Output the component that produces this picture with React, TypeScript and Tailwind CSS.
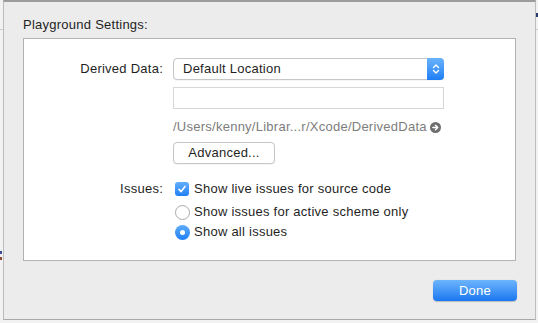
import React from "react";

function Chevrons() {
  return (
    <svg width="8" height="12" viewBox="0 0 8 12" fill="none" stroke="white" strokeWidth="1.4" strokeLinecap="round" strokeLinejoin="round">
      <path d="M1.5 4.5 L4 2 L6.5 4.5" />
      <path d="M1.5 7.5 L4 10 L6.5 7.5" />
    </svg>
  );
}

function PopUp() {
  return (
    <div className="flex h-[22px] w-[271px] rounded-[4px] border border-[#c6c6c6] bg-white shadow-[0_0.5px_0.5px_rgba(0,0,0,0.08)]">
      <span className="flex-1 pl-[9px] leading-[20px]">Default Location</span>
      <div className="-my-px -mr-px flex w-[17px] items-center justify-center rounded-r-[4px] bg-gradient-to-b from-[#6ab3fb] to-[#1a7ef5]">
        <Chevrons />
      </div>
    </div>
  );
}

function Checkbox() {
  return (
    <div className="flex h-[14px] w-[14px] items-center justify-center rounded-[3px] bg-gradient-to-b from-[#62aefc] to-[#1c80f4]">
      <svg width="10" height="10" viewBox="0 0 10 10" fill="none" stroke="white" strokeWidth="1.6" strokeLinecap="round" strokeLinejoin="round">
        <path d="M2 5.4 L4.1 7.6 L8 2.4" />
      </svg>
    </div>
  );
}

function Radio({ on }: { on?: boolean }) {
  if (on) {
    return (
      <div className="flex h-[15px] w-[15px] items-center justify-center rounded-full bg-gradient-to-b from-[#5eacfb] to-[#1c7ff4]">
        <div className="h-[5px] w-[5px] rounded-full bg-white" />
      </div>
    );
  }
  return <div className="h-[15px] w-[15px] rounded-full border border-[#a9a9a9] bg-white" />;
}

function GoIcon() {
  return (
    <svg width="11" height="11" viewBox="0 0 10 10" className="ml-[3px]">
      <circle cx="5" cy="5" r="5" fill="#6e6e6e" />
      <path d="M2.6 5 H7 M5 3 L7.1 5 L5 7" stroke="white" strokeWidth="1.3" fill="none" strokeLinecap="round" strokeLinejoin="round" />
    </svg>
  );
}

export default function App() {
  return (
    <div className="flex h-[323px] w-[538px] bg-[#f2f2f2] text-[13px] leading-[16px] tracking-[0.25px] text-[#1f1f1f] [font-family:'Liberation_Sans',Arial,sans-serif]">
      <div className="flex w-[3px] flex-col">
        <div className="mt-[29px] h-px bg-[#cfcfcf]" />
        <div className="mt-[221px] h-[3px] w-[2px] bg-[#3a4a9a]" />
        <div className="mt-[3px] h-[3px] w-[2px] bg-[#8a4a3a]" />
      </div>
      <div className="flex h-[320px] w-[533px] flex-col border-x border-b border-t-2 border-x-[#bcbcbc] border-b-[#a9a9a9] border-t-[#9c9c9c] bg-[#ececec]">
        <div className="pl-[19px] pt-[15px]">Playground Settings:</div>
        <div className="ml-[19px] mt-[5px] h-[223px] w-[493px] border border-[#b3b3b3] bg-white pt-[19px]">
          <div className="flex items-center">
            <div className="w-[139px] text-right">Derived Data:</div>
            <div className="ml-[10px]">
              <PopUp />
            </div>
          </div>
          <div className="ml-[149px] mt-[7px] h-[22px] w-[271px] border border-[#d7d7d7] bg-white" />
          <div className="ml-[149px] mt-[10px] flex items-center text-[#7d7d7d]">
            <span>/Users/kenny/Librar...r/Xcode/DerivedData</span>
            <GoIcon />
          </div>
          <div className="ml-[149px] mt-[7px] flex h-[22px] w-[102px] items-center justify-center rounded-[4px] border border-[#c6c6c6] bg-white shadow-[0_0.5px_0.5px_rgba(0,0,0,0.08)]">
            Advanced...
          </div>
          <div className="mt-[17px] flex items-center">
            <div className="w-[139px] text-right">Issues:</div>
            <div className="ml-[12px] flex items-center gap-[5px]">
              <Checkbox />
              <span>Show live issues for source code</span>
            </div>
          </div>
          <div className="ml-[151px] mt-[7px] flex items-center gap-[4px]">
            <Radio />
            <span>Show issues for active scheme only</span>
          </div>
          <div className="ml-[151px] mt-[4px] flex items-center gap-[4px]">
            <Radio on />
            <span>Show all issues</span>
          </div>
        </div>
        <div className="mr-[18px] mt-[19px] flex justify-end">
          <div className="flex h-[21px] w-[84px] items-center justify-center rounded-[4px] bg-gradient-to-b from-[#6cb4fb] to-[#1677f1] text-white shadow-[0_0.5px_1px_rgba(0,0,0,0.2)]">
            Done
          </div>
        </div>
      </div>
      <div className="flex w-[2px] flex-col">
        <div className="mt-[13px] h-[4px] bg-[#2a3a6a]" />
        <div className="mt-[12px] h-px bg-[#cfcfcf]" />
      </div>
    </div>
  );
}
